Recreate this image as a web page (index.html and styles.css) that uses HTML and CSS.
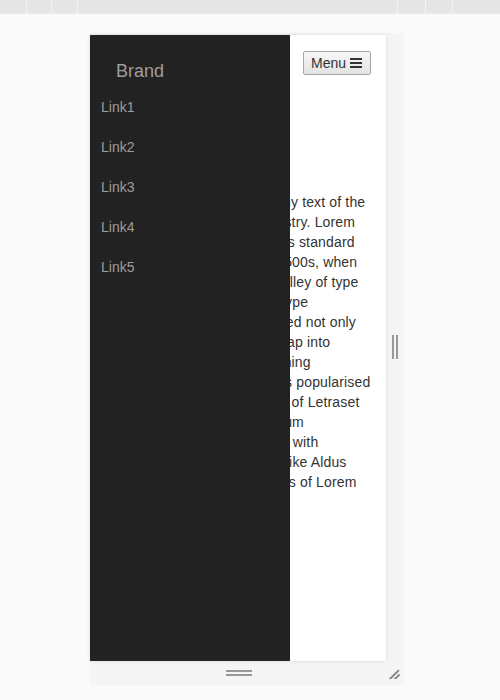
FILE: index.html
```html
<!DOCTYPE html>
<html>
<head>
<meta charset="utf-8">
<link rel="stylesheet" href="styles.css">
</head>
<body>
<div class="topbar">
  <div class="tabs-left"><span class="tab t1"></span><span class="tab t2"></span><span class="tab t3"></span></div>
  <div class="tabs-right"><span class="tab t4"></span><span class="tab t5"></span><span class="tab t6"></span></div>
</div>
<div class="stage">
  <div class="resizer">
    <div class="row">
      <div class="frame">
        <div class="content">
          <button class="menu-btn">Menu <span class="bars"><i></i><i></i><i></i></span></button>
          <p class="text">Lorem Ipsum is simply dummy text of the printing and typesetting industry. Lorem Ipsum has been the industry's standard dummy text ever since the 1500s, when an unknown printer took a galley of type and scrambled it to make a type specimen book. It has survived not only five centuries, but also the leap into electronic typesetting, remaining essentially unchanged. It was popularised in the 1960s with the release of Letraset sheets containing Lorem Ipsum passages, and more recently with desktop publishing software like Aldus PageMaker including versions of Lorem Ipsum.</p>
        </div>
        <nav class="sidebar">
          <div class="brand">Brand</div>
          <a class="link">Link1</a>
          <a class="link">Link2</a>
          <a class="link">Link3</a>
          <a class="link">Link4</a>
          <a class="link">Link5</a>
        </nav>
      </div>
      <div class="side-grip"><i></i><i></i></div>
    </div>
    <div class="bottom">
      <div class="bottom-grip"><i></i><i></i></div>
      <div class="corner"><i></i><i></i></div>
    </div>
  </div>
</div>
</body>
</html>
```
FILE: styles.css
```css
html, body {
  margin: 0;
  padding: 0;
}
body {
  background: #fafafa;
  font-family: "Liberation Sans", Arial, sans-serif;
  width: 500px;
  height: 700px;
  overflow: hidden;
}
.topbar {
  height: 13px;
  background: #e6e6e6;
  display: flex;
  justify-content: space-between;
  border-bottom: 1px solid #ececec;
}
.tabs-left, .tabs-right {
  display: flex;
}
.tab {
  display: block;
  height: 13px;
  border-right: 1px solid #f4f4f4;
}
.t1 { width: 26px; }
.t2 { width: 24px; }
.t3 { width: 25px; }
.tabs-right .tab { border-right: none; border-left: 1px solid #f4f4f4; }
.t4 { width: 27px; }
.t5 { width: 26px; }
.t6 { width: 47px; }
.stage {
  padding: 19px 0 0 90px;
}
.resizer {
  width: 314px;
  background: #f5f5f5;
}
.row {
  display: flex;
  align-items: center;
}
.frame {
  position: relative;
  width: 296px;
  height: 626px;
  background: #fff;
  box-shadow: 0 0 4px rgba(0,0,0,0.12);
  overflow: hidden;
  margin-top: 2px;
}
.content {
  padding: 16px 15px;
  color: #333;
  font-size: 14px;
  line-height: 20px;
}
.menu-btn {
  display: flex;
  align-items: center;
  margin-left: 198px;
  height: 24px;
  width: 68px;
  padding: 0 0 0 7px;
  border: 1px solid #a6a6a6;
  border-radius: 2px;
  background: linear-gradient(#f7f7f7, #e3e3e3);
  font-family: "Liberation Sans", Arial, sans-serif;
  font-size: 14px;
  color: #333;
}
.bars {
  display: flex;
  flex-direction: column;
  gap: 2px;
  margin-left: 4px;
}
.bars i {
  display: block;
  width: 12px;
  height: 2px;
  background: #333;
}
.text {
  margin: 117px 0 0;
  letter-spacing: 0.15px;
}
.sidebar {
  position: absolute;
  left: 0;
  top: 0;
  bottom: 0;
  width: 200px;
  background: #222;
  padding-top: 24px;
  box-sizing: border-box;
}
.brand {
  color: #9d9d9d;
  font-size: 18px;
  line-height: 24px;
  padding-left: 26px;
}
.link {
  display: block;
  color: #9d9d9d;
  font-size: 14px;
  line-height: 20px;
  padding: 10px 11px;
}
.brand + .link { margin-top: 4px; }
.side-grip {
  flex: 1;
  display: flex;
  justify-content: center;
  gap: 2px;
}
.side-grip i {
  display: block;
  width: 2px;
  height: 24px;
  background: #999;
}
.bottom {
  height: 24px;
  display: flex;
  align-items: center;
}
.bottom-grip {
  margin-left: 136px;
  display: flex;
  flex-direction: column;
  gap: 2px;
}
.bottom-grip i {
  display: block;
  width: 26px;
  height: 2px;
  background: #999;
}
.corner {
  margin-left: auto;
  margin-right: 3px;
  width: 12px;
  height: 12px;
  position: relative;
  overflow: hidden;
}
.corner i {
  position: absolute;
  height: 2px;
  background: #888;
  transform: rotate(-45deg);
  transform-origin: left center;
}
.corner i:first-child { width: 14px; left: 0; top: 12px; }
.corner i:last-child { width: 8px; left: 5px; top: 12px; }
```
